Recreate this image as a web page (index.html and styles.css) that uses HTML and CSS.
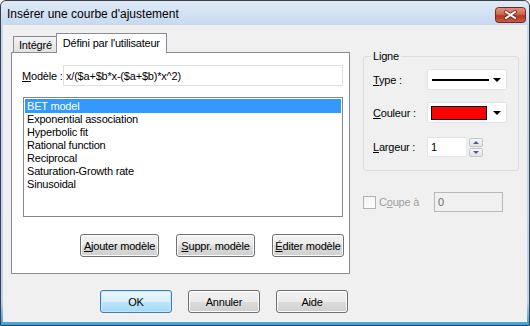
FILE: index.html
```html
<!DOCTYPE html>
<html>

<head>
    <meta charset="UTF-8">
    <title>Insérer une courbe d'ajustement</title>
    <link rel="stylesheet" href="styles.css">
</head>

<body>
    <div class="window">
        <!-- Barre de titre -->
        <div class="titlebar">
            <span class="title">Insérer une courbe d'ajustement</span>
            <svg class="title-close" width="31" height="16" viewBox="0 0 31 16">
                <defs>
                    <linearGradient id="closeFill" x1="0" y1="0" x2="0" y2="1">
                        <stop offset="0" stop-color="#e29484"/>
                        <stop offset="0.45" stop-color="#d0684f"/>
                        <stop offset="0.55" stop-color="#b5371f"/>
                        <stop offset="1" stop-color="#cc5e45"/>
                    </linearGradient>
                </defs>
                <rect x="0.5" y="0.5" width="30" height="15" rx="3" fill="url(#closeFill)" stroke="#6e2a24"/>
                <path d="M11 5 L20 11 M20 5 L11 11" stroke="#6b2a22" stroke-width="3.6" stroke-linecap="square"/>
                <path d="M11 5 L20 11 M20 5 L11 11" stroke="#ffffff" stroke-width="2" stroke-linecap="square"/>
            </svg>
        </div>

        <div class="client">
            <div class="main">
                <!-- Onglets -->
                <div class="tabs-area">
                    <div class="tabstrip">
                        <div class="tab">Intégré</div>
                        <div class="tab active">Défini par l'utilisateur</div>
                    </div>
                    <div class="panel">
                        <div class="model-row">
                            <span class="model-label"><u>M</u>odèle :</span>
                            <div class="textbox model-input">x/($a+$b*x-($a+$b)*x^2)</div>
                        </div>
                        <div class="listbox">
                            <div class="item selected">BET model</div>
                            <div class="item">Exponential association</div>
                            <div class="item">Hyperbolic fit</div>
                            <div class="item">Rational function</div>
                            <div class="item">Reciprocal</div>
                            <div class="item">Saturation-Growth rate</div>
                            <div class="item">Sinusoidal</div>
                        </div>
                        <div class="panel-buttons">
                            <div class="btn btn-wide"><u>A</u>jouter modèle</div>
                            <div class="btn btn-wide"><u>S</u>uppr. modèle</div>
                            <div class="btn"><u>É</u>diter modèle</div>
                        </div>
                    </div>
                </div>

                <!-- Ligne -->
                <div class="side">
                    <fieldset class="group">
                        <legend>Ligne</legend>
                        <div class="field-row">
                            <span class="field-label"><u>T</u>ype :</span>
                            <div class="combo">
                                <span class="line-sample"></span>
                                <span class="arrow"></span>
                            </div>
                        </div>
                        <div class="field-row color-row">
                            <span class="field-label"><u>C</u>ouleur :</span>
                            <div class="combo">
                                <span class="color-sample"></span>
                                <span class="arrow"></span>
                            </div>
                        </div>
                        <div class="field-row width-row">
                            <span class="field-label"><u>L</u>argeur :</span>
                            <div class="textbox width-input">1</div>
                            <div class="spin">
                                <div class="spin-btn"><span class="spin-up"></span></div>
                                <div class="spin-btn"><span class="spin-down"></span></div>
                            </div>
                        </div>
                    </fieldset>

                    <div class="clip-row">
                        <span class="checkbox"></span>
                        <span class="clip-label">C<u>o</u>upe à</span>
                        <div class="textbox disabled clip-input">0</div>
                    </div>
                </div>
            </div>

            <!-- Boutons du dialogue -->
            <div class="dialog-buttons">
                <div class="btn btn-dialog default">OK</div>
                <div class="btn btn-dialog">Annuler</div>
                <div class="btn btn-dialog">Aide</div>
            </div>
        </div>
    </div>
</body>

</html>
```

FILE: styles.css
```css
body {
    margin: 0;
    padding: 0;
    background-color: #ffffff;
}

.window {
    width: 530px;
    height: 326px;
    box-sizing: border-box;
    border: 1px solid #3b4048;
    border-radius: 6px 6px 0 0;
    padding: 0 2px 3px 2px;
    background: linear-gradient(to bottom, #dfeaf7 0, #c6d8ee 26px, #bcd3ee 300px, #3aa3dc 100%);
    display: flex;
    flex-direction: column;
}

.titlebar {
    height: 24px;
    display: flex;
    align-items: center;
    justify-content: space-between;
    padding: 0 1px 0 4px;
}

.title {
    font-family: "Liberation Sans", Arial, sans-serif;
    font-size: 12px;
    color: #000000;
    padding-top: 2px;
}

.title-close {
    flex: none;
    display: block;
    margin-top: 4px;
}

.client {
    flex: 1;
    background-color: #f0f0f0;
    padding: 8px 8px 0 8px;
    font-family: "Liberation Sans", Arial, sans-serif;
    font-size: 11px;
    letter-spacing: -0.2px;
    color: #000000;
    display: flex;
    flex-direction: column;
}

.main {
    display: flex;
    gap: 13px;
}

/* Onglets */

.tabs-area {
    width: 339px;
    display: flex;
    flex-direction: column;
}

.tabstrip {
    display: flex;
    align-items: flex-end;
    height: 19px;
    padding-left: 2px;
    position: relative;
    z-index: 1;
}

.tab {
    height: 16px;
    box-sizing: border-box;
    padding: 2px 4px 0 5px;
    border: 1px solid #898c95;
    border-bottom: none;
    border-right: none;
    background: linear-gradient(to bottom, #f2f2f2, #e3e3e3);
    line-height: 13px;
    white-space: nowrap;
}

.tab.active {
    height: 20px;
    margin-bottom: -1px;
    padding: 3px 6px 0 6px;
    border-right: 1px solid #898c95;
    background: #ffffff;
}

.panel {
    height: 222px;
    box-sizing: border-box;
    border: 1px solid #898c95;
    background-color: #ffffff;
    padding: 12px 5px 0 10px;
}

.model-row {
    display: flex;
    align-items: center;
    height: 21px;
}

.model-label {
    width: 41px;
    flex: none;
    white-space: nowrap;
}

.textbox {
    box-sizing: border-box;
    border: 1px solid #abadb3;
    border-top-color: #e2e3ea;
    border-left-color: #e2e3ea;
    border-right-color: #e3e9ef;
    border-bottom-color: #e3e9ef;
    background-color: #ffffff;
    padding: 0 3px;
    display: flex;
    align-items: center;
}

.model-input {
    width: 280px;
    height: 21px;
    border-color: #dbdfe6;
    padding-left: 2px;
}

.listbox {
    margin: 11px 0 0 1px;
    width: 320px;
    height: 120px;
    box-sizing: border-box;
    border: 1px solid #828790;
    padding: 1px;
}

.item {
    height: 13px;
    line-height: 13px;
    padding-left: 2px;
}

.item.selected {
    height: 14px;
    line-height: 14px;
    background-color: #3399ff;
    color: #ffffff;
}

.panel-buttons {
    display: flex;
    justify-content: flex-end;
    gap: 17px;
    margin-top: 17px;
}

.btn {
    height: 23px;
    box-sizing: border-box;
    border: 1px solid #707070;
    border-radius: 3px;
    background: linear-gradient(to bottom, #f2f2f2 0, #ebebeb 50%, #dddddd 50%, #cfcfcf 100%);
    box-shadow: inset 0 0 0 1px #fcfcfc;
    display: flex;
    align-items: center;
    justify-content: center;
    width: 72px;
    white-space: nowrap;
}

.btn-wide {
    width: 79px;
}

.dialog-buttons {
    display: flex;
    gap: 16px;
    margin-top: 16px;
    padding-left: 89px;
}

.btn.default {
    border-color: #3c7fb1;
    background: linear-gradient(to bottom, #eaf6fd 0, #d9f0fc 50%, #bee6fd 50%, #a7d9f5 100%);
    box-shadow: inset 0 0 0 1px #c6e6f7;
}

/* Ligne */

.side {
    width: 156px;
    padding-top: 17px;
}

.group {
    margin: 0;
    padding: 6px 11px 13px 9px;
    border: 1px solid #d5dfe5;
    border-radius: 3px;
}

.group legend {
    padding: 0 2px;
    margin-left: -2px;
    line-height: 13px;
}

.field-row {
    display: flex;
    align-items: center;
}

.color-row {
    margin-top: 12px;
}

.width-row {
    margin-top: 14px;
}

.field-label {
    width: 54px;
    flex: none;
}

.combo {
    width: 80px;
    height: 21px;
    box-sizing: border-box;
    border: 1px solid #e0e3e7;
    border-radius: 2px;
    background-color: #ffffff;
    display: flex;
    align-items: center;
    padding: 0 5px 0 3px;
    gap: 4px;
}

.line-sample {
    width: 57px;
    height: 2px;
    background-color: #000000;
    margin-left: 1px;
}

.color-sample {
    width: 56px;
    height: 14px;
    box-sizing: border-box;
    border: 1px solid #000000;
    background-color: #ff0000;
}

.arrow {
    margin-left: auto;
    width: 0;
    height: 0;
    border-left: 4px solid transparent;
    border-right: 4px solid transparent;
    border-top: 4px solid #000000;
}

.width-input {
    width: 40px;
    height: 20px;
    padding-left: 3px;
}

.spin {
    margin-left: 2px;
    display: flex;
    flex-direction: column;
    gap: 1px;
}

.spin-btn {
    width: 14px;
    height: 9px;
    box-sizing: border-box;
    border: 1px solid #c3c6cc;
    border-radius: 2px;
    background: linear-gradient(to bottom, #f7f7f7, #e3e3e3);
    display: flex;
    align-items: center;
    justify-content: center;
}

.spin-up {
    border-left: 3px solid transparent;
    border-right: 3px solid transparent;
    border-bottom: 3px solid #4d6185;
}

.spin-down {
    border-left: 3px solid transparent;
    border-right: 3px solid transparent;
    border-top: 3px solid #4d6185;
}

.clip-row {
    display: flex;
    align-items: center;
    margin-top: 21px;
}

.checkbox {
    width: 13px;
    height: 13px;
    box-sizing: border-box;
    border: 1px solid #b1b1b1;
    background: linear-gradient(to bottom right, #f4f4f4, #fbfbfb);
}

.clip-label {
    margin-left: 3px;
    width: 55px;
    color: #a0a0a0;
}

.clip-input {
    width: 69px;
    height: 20px;
    border: 1px solid #b8b8b8;
    background-color: #f0f0f0;
    color: #6d6d6d;
}
```
